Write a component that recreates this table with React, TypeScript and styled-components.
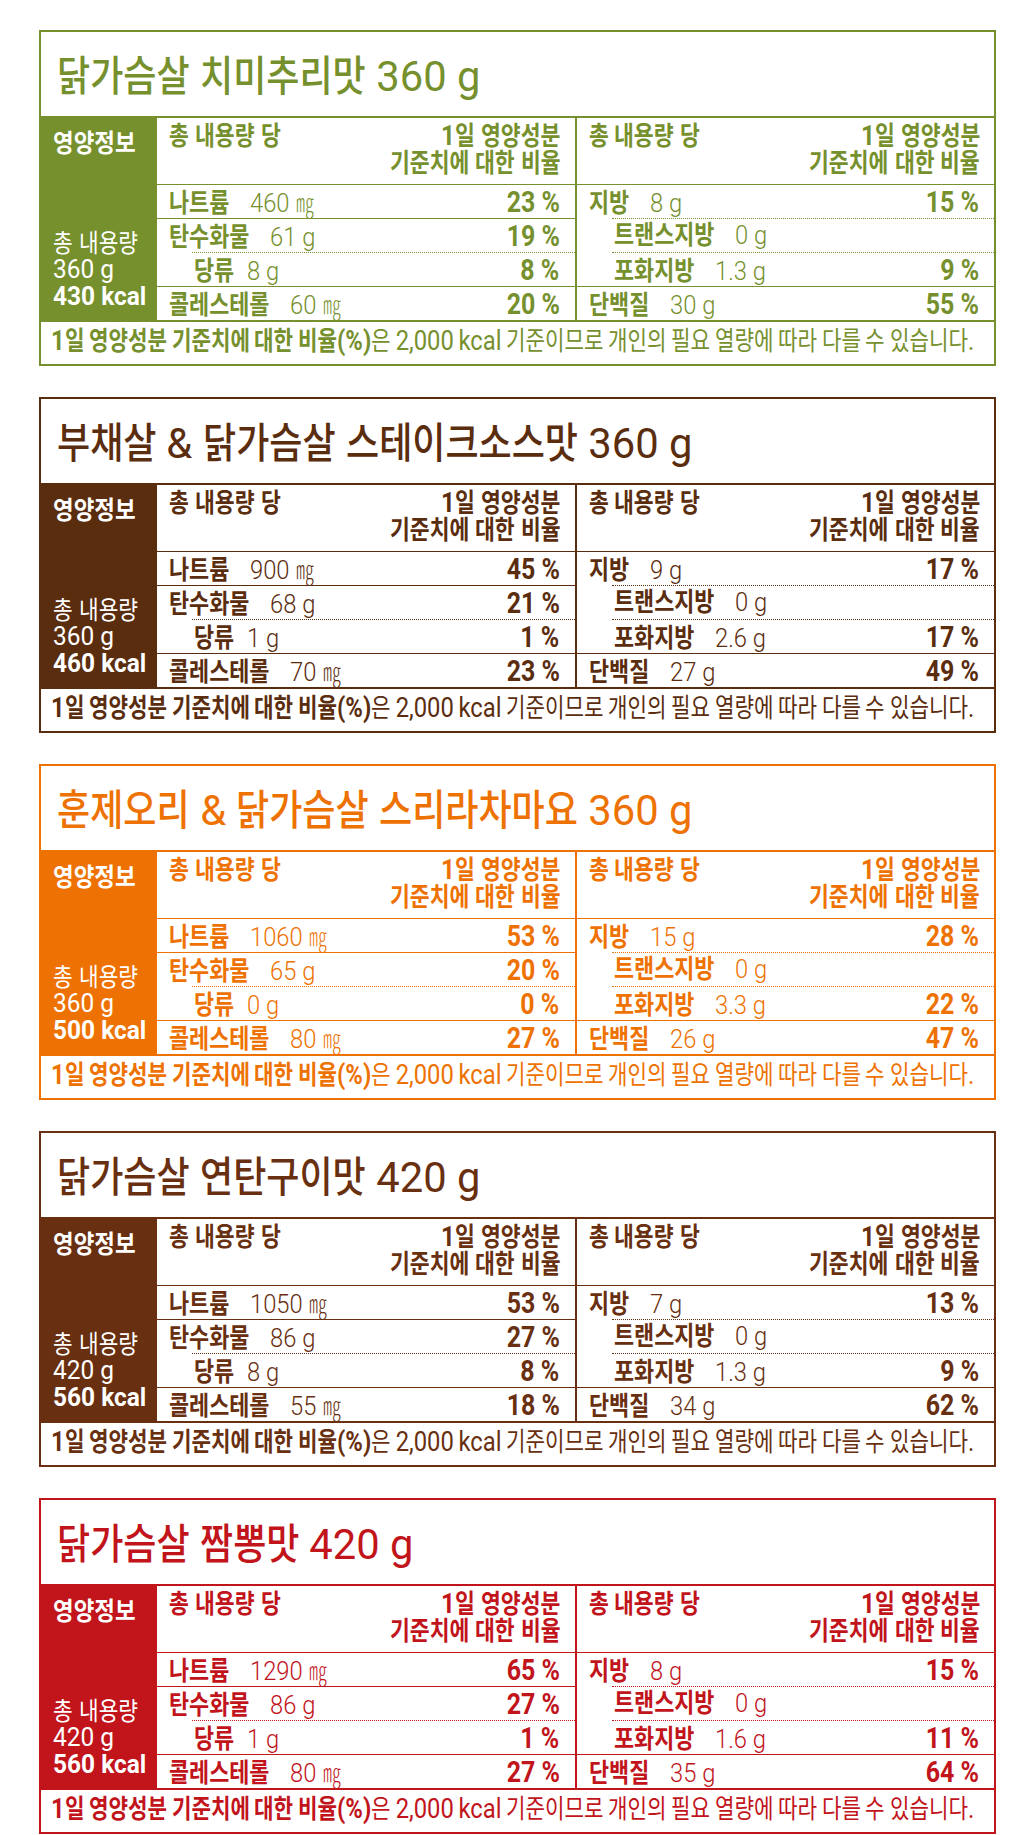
import React, { useLayoutEffect, useRef, useState } from 'react';
import styled, { createGlobalStyle } from 'styled-components';

const GlobalStyle = createGlobalStyle`
  html, body { margin: 0; padding: 0; background: #ffffff; }
  body { font-family: Roboto, "Noto Sans CJK KR", sans-serif; }
`;

type Item = { label: string; value: string; pct?: string; indent?: boolean; gap?: number };
type CardData = {
  color: string;
  title: string;
  weight: string;
  kcal: string;
  left: Item[];
  right: Item[];
};

const mk = (
  color: string,
  title: string,
  weight: string,
  kcal: string,
  l: [string, string, string, string, string, string, string, string],
  r: [string, string, string, string, string, string, string]
): CardData => ({
  color,
  title,
  weight,
  kcal,
  left: [
    { label: '나트륨', value: l[0], pct: l[1] },
    { label: '탄수화물', value: l[2], pct: l[3] },
    { label: '당류', value: l[4], pct: l[5], indent: true, gap: 13 },
    { label: '콜레스테롤', value: l[6], pct: l[7] },
  ],
  right: [
    { label: '지방', value: r[0], pct: r[1] },
    { label: '트랜스지방', value: r[2], indent: true },
    { label: '포화지방', value: r[3], pct: r[4], indent: true },
    { label: '단백질', value: r[5], pct: r[6] },
  ],
});

const CARDS: CardData[] = [
  mk('#76902e', '닭가슴살 치미추리맛 360 g', '360 g', '430 kcal',
    ['460 ㎎', '23 %', '61 g', '19 %', '8 g', '8 %', '60 ㎎', '20 %'],
    ['8 g', '15 %', '0 g', '1.3 g', '9 %', '30 g', '55 %']),
  mk('#5b2d0f', '부채살 & 닭가슴살 스테이크소스맛 360 g', '360 g', '460 kcal',
    ['900 ㎎', '45 %', '68 g', '21 %', '1 g', '1 %', '70 ㎎', '23 %'],
    ['9 g', '17 %', '0 g', '2.6 g', '17 %', '27 g', '49 %']),
  mk('#ee7203', '훈제오리 & 닭가슴살 스리라차마요 360 g', '360 g', '500 kcal',
    ['1060 ㎎', '53 %', '65 g', '20 %', '0 g', '0 %', '80 ㎎', '27 %'],
    ['15 g', '28 %', '0 g', '3.3 g', '22 %', '26 g', '47 %']),
  mk('#682f10', '닭가슴살 연탄구이맛 420 g', '420 g', '560 kcal',
    ['1050 ㎎', '53 %', '86 g', '27 %', '8 g', '8 %', '55 ㎎', '18 %'],
    ['7 g', '13 %', '0 g', '1.3 g', '9 %', '34 g', '62 %']),
  mk('#c1141b', '닭가슴살 짬뽕맛 420 g', '420 g', '560 kcal',
    ['1290 ㎎', '65 %', '86 g', '27 %', '1 g', '1 %', '80 ㎎', '27 %'],
    ['8 g', '15 %', '0 g', '1.6 g', '11 %', '35 g', '64 %']),
];

/* The label is set in a condensed gothic face. Each run of text is drawn narrower:
   Hangul runs use --hs (size relative to the Latin text) and --sq (squeeze),
   Latin runs use --lsq. The run box takes the measured, squeezed width. */
const RunBox = styled.span<{ $cjk: boolean }>`
  display: inline-block;
  white-space: pre;
  line-height: 0.7;
  font-size: ${(p) => (p.$cjk ? 'calc(var(--hs, 1) * 1em)' : '1em')};
`;
const RunInner = styled.span<{ $cjk: boolean }>`
  display: inline-block;
  transform: scaleX(${(p) => (p.$cjk ? 'var(--sq, 0.8)' : 'var(--lsq, 1)')});
  transform-origin: 0 0;
`;

function Run({ text, cjk }: { text: string; cjk: boolean }) {
  const inner = useRef<HTMLSpanElement>(null);
  const [w, setW] = useState<number | undefined>(undefined);
  useLayoutEffect(() => {
    const el = inner.current;
    if (!el) return;
    const measure = () => setW(el.getBoundingClientRect().width);
    measure();
    const fonts = (document as Document & { fonts?: FontFaceSet }).fonts;
    if (fonts && fonts.ready) fonts.ready.then(measure);
  }, [text]);
  return (
    <RunBox
      $cjk={cjk}
      data-cjk={cjk ? 'true' : undefined}
      style={w !== undefined ? { width: w } : undefined}
    >
      <RunInner $cjk={cjk} ref={inner}>
        {text}
      </RunInner>
    </RunBox>
  );
}

const CJK_RE = /([\u1100-\u11FF\u3130-\u318F\uAC00-\uD7A3\u3380-\u33FF]+)/;
const K = ({ t }: { t: string }) => (
  <>
    {t.split(CJK_RE).map((p, i) => (p ? <Run key={i} text={p} cjk={i % 2 === 1} /> : null))}
  </>
);

const Page = styled.main`
  display: flex;
  flex-direction: column;
  gap: 31px;
  padding: 30px 39px 0;
`;

const Card = styled.section<{ $c: string }>`
  box-sizing: border-box;
  height: 336px;
  border: 2px solid ${(p) => p.$c};
  color: ${(p) => p.$c};
  display: flex;
  flex-direction: column;
`;

const TitleBar = styled.h2`
  margin: 0;
  height: 84px;
  display: flex;
  align-items: center;
  padding: 4px 0 0 16px;
  box-sizing: border-box;
  font-size: 43px;
  font-weight: 400;
  line-height: 1;
  white-space: nowrap;
  --hs: 0.98;
  --sq: 0.855;
  --lsq: 0.97;

  & [data-cjk='true'] {
    font-weight: 500;
  }
`;

const TitleText = styled.span``;

const Table = styled.div<{ $c: string }>`
  box-sizing: border-box;
  height: 206px;
  display: flex;
  border-top: 2px solid ${(p) => p.$c};
  border-bottom: 2px solid ${(p) => p.$c};
`;

const Side = styled.div<{ $c: string }>`
  width: 116px;
  flex: none;
  background: ${(p) => p.$c};
  color: #ffffff;
  display: flex;
  flex-direction: column;
  justify-content: space-between;
  padding: 11px 0 11px 12px;
  box-sizing: border-box;
  white-space: nowrap;
`;

const SideHead = styled.div`
  font-size: 25px;
  font-weight: 700;
  line-height: 30px;
  --hs: 1.02;
  --sq: 0.88;
`;

const SideInfo = styled.div`
  font-size: 26px;
  font-weight: 400;
  line-height: 26.5px;
  --hs: 0.98;
  --sq: 0.84;
  --lsq: 0.94;
`;

const Kcal = styled.div`
  font-weight: 700;
`;

const Half = styled.div<{ $c: string; $divider?: boolean }>`
  flex: 1;
  min-width: 0;
  display: flex;
  flex-direction: column;
  border-left: ${(p) => (p.$divider ? `2px solid ${p.$c}` : 'none')};
`;

const HalfHead = styled.div`
  height: 66px;
  box-sizing: border-box;
  display: flex;
  justify-content: space-between;
  padding: 5px 14px 0 12px;
  font-size: 27px;
  font-weight: 700;
  line-height: 27px;
  white-space: nowrap;
  --hs: 0.963;
  --sq: 0.83;
  --lsq: 0.9;
`;

const HeadRight = styled.div`
  text-align: right;
`;

const Row = styled.div<{ $c: string; $indent?: boolean }>`
  box-sizing: border-box;
  height: 34px;
  display: flex;
  align-items: baseline;
  border-top: 1px ${(p) => (p.$indent ? 'dotted' : 'solid')} ${(p) => p.$c};
  margin-left: ${(p) => (p.$indent ? '35px' : '0')};
  padding: 0 15px 0 ${(p) => (p.$indent ? '2px' : '12px')};
  line-height: 34px;
  white-space: nowrap;
`;

const Label = styled.span`
  font-size: 25px;
  font-weight: 700;
  --hs: 1.04;
  --sq: 0.84;
`;

const Val = styled.span<{ $gap: number }>`
  margin-left: ${(p) => p.$gap}px;
  font-size: 25px;
  font-weight: 300;
  --hs: 1;
  --sq: 0.72;
  --lsq: 0.95;
`;

const Pct = styled.span`
  margin-left: auto;
  display: inline-block;
  font-size: 29px;
  font-weight: 700;
  transform: scaleX(0.86);
  transform-origin: 100% 50%;
`;

const Footer = styled.div`
  flex: 1;
  display: flex;
  align-items: center;
  padding: 0 0 6px 10px;
  font-size: 28px;
  font-weight: 400;
  white-space: nowrap;
  --hs: 0.93;
  --sq: 0.815;
  --lsq: 0.85;
`;

const FootText = styled.span`
  word-spacing: -1.5px;
`;

const FootBold = styled.b`
  font-weight: 700;
`;

function HalfTable({ c, items, divider }: { c: string; items: Item[]; divider?: boolean }) {
  return (
    <Half $c={c} $divider={divider}>
      <HalfHead>
        <div>
          <K t="총 내용량 당" />
        </div>
        <HeadRight>
          <div>
            <K t="1일 영양성분" />
          </div>
          <div>
            <K t="기준치에 대한 비율" />
          </div>
        </HeadRight>
      </HalfHead>
      {items.map((it) => (
        <Row key={it.label} $c={c} $indent={it.indent}>
          <Label>
            <K t={it.label} />
          </Label>
          <Val $gap={it.gap ?? 21}>
            <K t={it.value} />
          </Val>
          {it.pct && <Pct>{it.pct}</Pct>}
        </Row>
      ))}
    </Half>
  );
}

function NutritionCard({ d }: { d: CardData }) {
  return (
    <Card $c={d.color}>
      <TitleBar>
        <TitleText>
          <K t={d.title} />
        </TitleText>
      </TitleBar>
      <Table $c={d.color}>
        <Side $c={d.color}>
          <SideHead>
            <K t="영양정보" />
          </SideHead>
          <SideInfo>
            <div>
              <K t="총 내용량" />
            </div>
            <div>
              <K t={d.weight} />
            </div>
            <Kcal>
              <K t={d.kcal} />
            </Kcal>
          </SideInfo>
        </Side>
        <HalfTable c={d.color} items={d.left} />
        <HalfTable c={d.color} items={d.right} divider />
      </Table>
      <Footer>
        <FootText>
          <FootBold>
            <K t="1일 영양성분 기준치에 대한 비율(%)" />
          </FootBold>
          <K t="은 2,000 kcal 기준이므로 개인의 필요 열량에 따라 다를 수 있습니다." />
        </FootText>
      </Footer>
    </Card>
  );
}

export default function App() {
  return (
    <>
      <GlobalStyle />
      <Page>
        {CARDS.map((d) => (
          <NutritionCard key={d.title} d={d} />
        ))}
      </Page>
    </>
  );
}
